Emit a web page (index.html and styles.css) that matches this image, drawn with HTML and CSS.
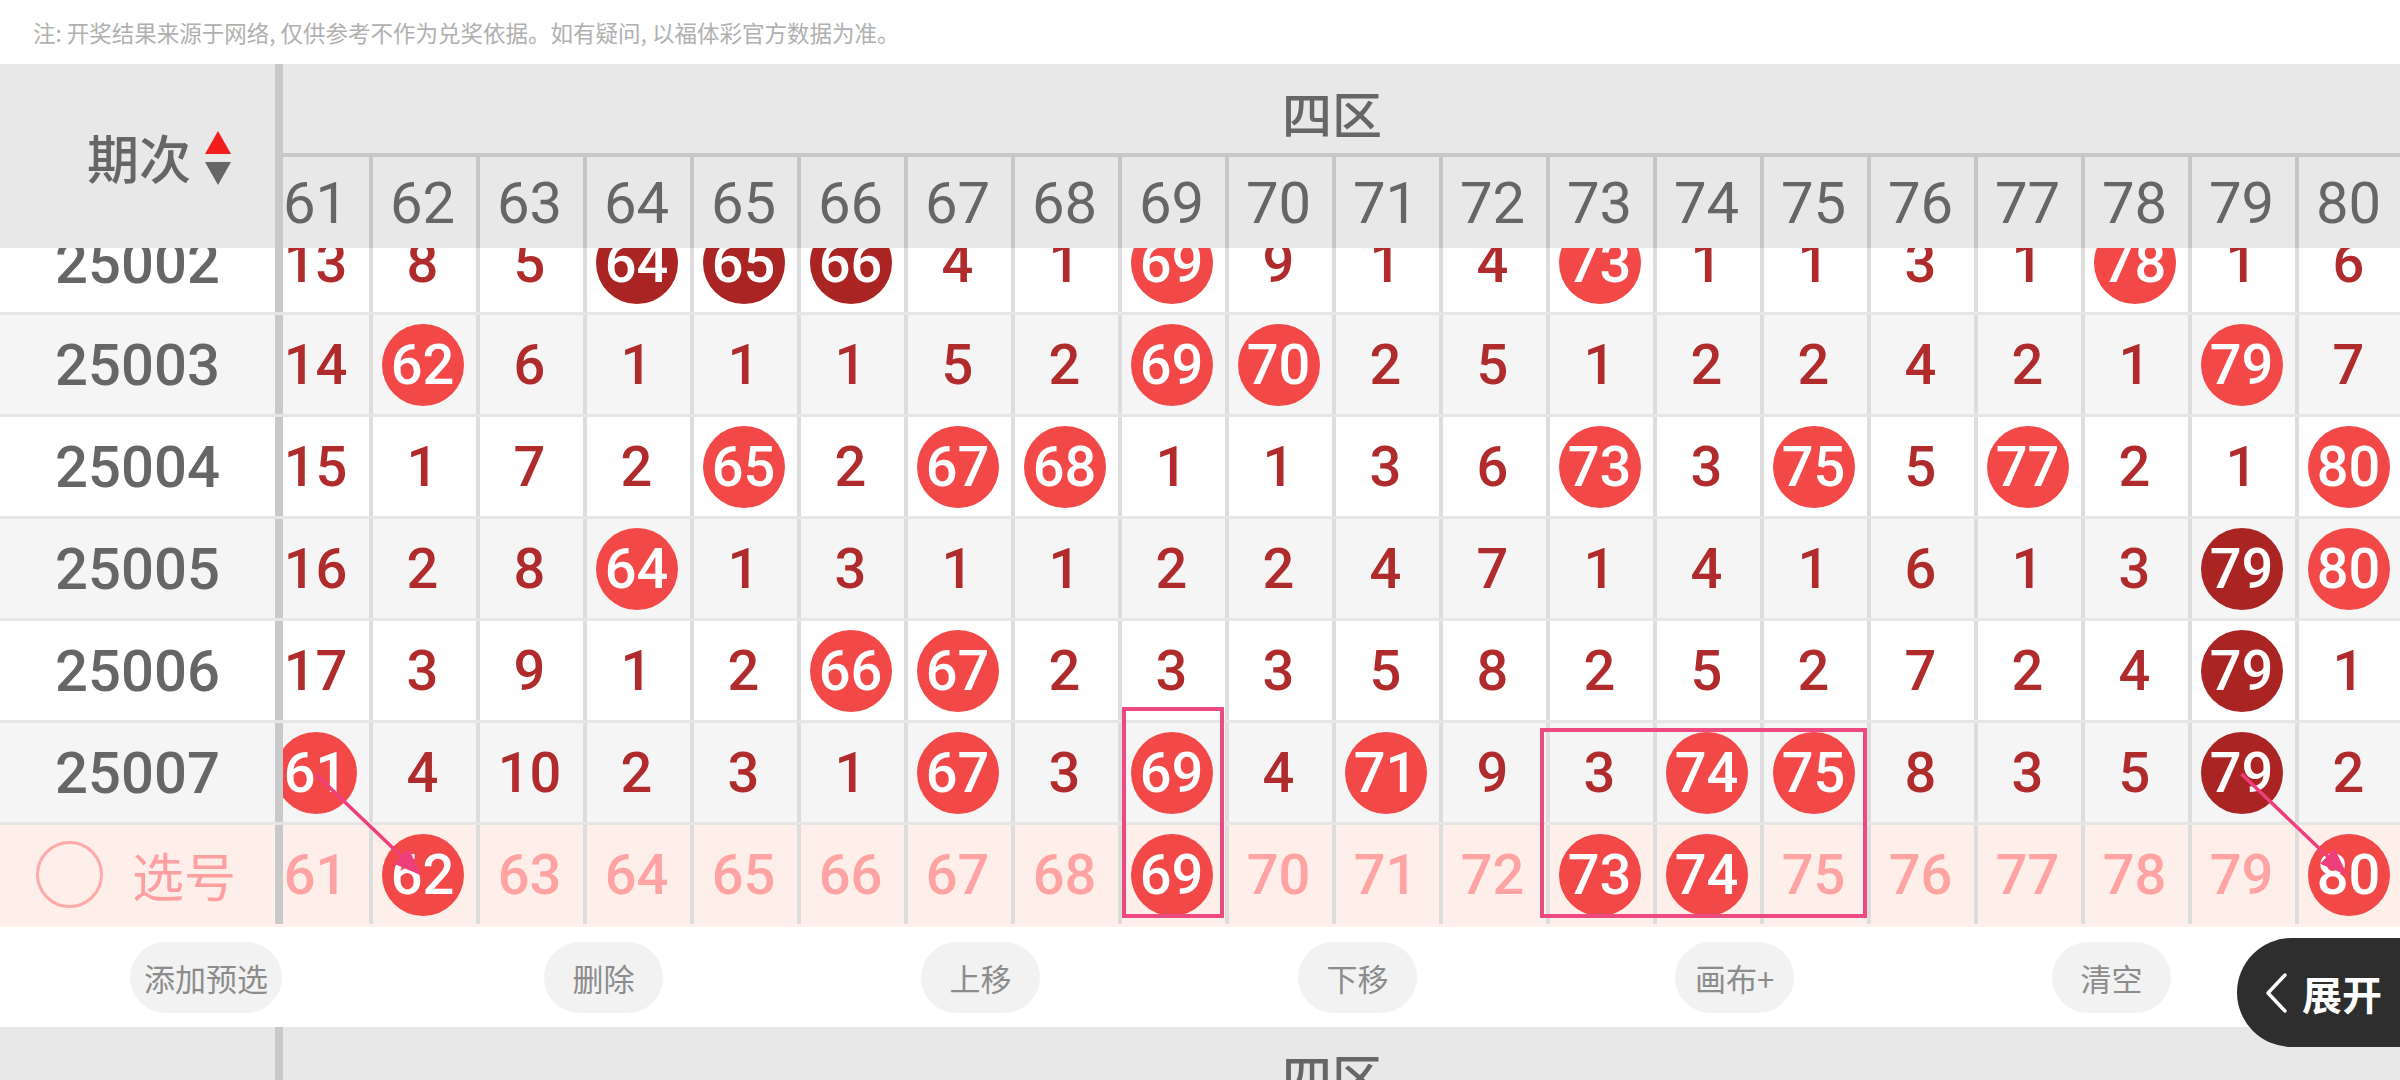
FILE: index.html
```html
<!DOCTYPE html>
<html lang="zh-CN">
<head>
<meta charset="utf-8">
<title>四区走势</title>
<link rel="stylesheet" href="styles.css">
</head>
<body>
<div class="notice">注: 开奖结果来源于网络, 仅供参考不作为兑奖依据。如有疑问, 以福体彩官方数据为准。</div>

<section class="table">
  <div class="thead">
    <div class="lead head-lead"><span class="lead-title">期次</span><span class="sort"><i class="up"></i><i class="down"></i></span></div>
    <div class="scroll">
      <div class="track">
        <div class="zone">四区</div>
        <div class="hcells">
          <div class="hc">61</div><div class="hc">62</div><div class="hc">63</div><div class="hc">64</div><div class="hc">65</div><div class="hc">66</div><div class="hc">67</div><div class="hc">68</div><div class="hc">69</div><div class="hc">70</div><div class="hc">71</div><div class="hc">72</div><div class="hc">73</div><div class="hc">74</div><div class="hc">75</div><div class="hc">76</div><div class="hc">77</div><div class="hc">78</div><div class="hc">79</div><div class="hc">80</div>
        </div>
      </div>
    </div>
  </div>

  <div class="tbody">
    <div class="rows">
      <div class="row">
        <div class="lead period">25002</div>
        <div class="scroll"><div class="track cells">
          <div class="c">13</div><div class="c">8</div><div class="c">5</div><div class="c"><span class="b d">64</span></div><div class="c"><span class="b d">65</span></div><div class="c"><span class="b d">66</span></div><div class="c">4</div><div class="c">1</div><div class="c"><span class="b">69</span></div><div class="c">9</div><div class="c">1</div><div class="c">4</div><div class="c"><span class="b">73</span></div><div class="c">1</div><div class="c">1</div><div class="c">3</div><div class="c">1</div><div class="c"><span class="b">78</span></div><div class="c">1</div><div class="c">6</div>
        </div></div>
      </div>
      <div class="row alt">
        <div class="lead period">25003</div>
        <div class="scroll"><div class="track cells">
          <div class="c">14</div><div class="c"><span class="b">62</span></div><div class="c">6</div><div class="c">1</div><div class="c">1</div><div class="c">1</div><div class="c">5</div><div class="c">2</div><div class="c"><span class="b">69</span></div><div class="c"><span class="b">70</span></div><div class="c">2</div><div class="c">5</div><div class="c">1</div><div class="c">2</div><div class="c">2</div><div class="c">4</div><div class="c">2</div><div class="c">1</div><div class="c"><span class="b">79</span></div><div class="c">7</div>
        </div></div>
      </div>
      <div class="row">
        <div class="lead period">25004</div>
        <div class="scroll"><div class="track cells">
          <div class="c">15</div><div class="c">1</div><div class="c">7</div><div class="c">2</div><div class="c"><span class="b">65</span></div><div class="c">2</div><div class="c"><span class="b">67</span></div><div class="c"><span class="b">68</span></div><div class="c">1</div><div class="c">1</div><div class="c">3</div><div class="c">6</div><div class="c"><span class="b">73</span></div><div class="c">3</div><div class="c"><span class="b">75</span></div><div class="c">5</div><div class="c"><span class="b">77</span></div><div class="c">2</div><div class="c">1</div><div class="c"><span class="b">80</span></div>
        </div></div>
      </div>
      <div class="row alt">
        <div class="lead period">25005</div>
        <div class="scroll"><div class="track cells">
          <div class="c">16</div><div class="c">2</div><div class="c">8</div><div class="c"><span class="b">64</span></div><div class="c">1</div><div class="c">3</div><div class="c">1</div><div class="c">1</div><div class="c">2</div><div class="c">2</div><div class="c">4</div><div class="c">7</div><div class="c">1</div><div class="c">4</div><div class="c">1</div><div class="c">6</div><div class="c">1</div><div class="c">3</div><div class="c"><span class="b d">79</span></div><div class="c"><span class="b">80</span></div>
        </div></div>
      </div>
      <div class="row">
        <div class="lead period">25006</div>
        <div class="scroll"><div class="track cells">
          <div class="c">17</div><div class="c">3</div><div class="c">9</div><div class="c">1</div><div class="c">2</div><div class="c"><span class="b">66</span></div><div class="c"><span class="b">67</span></div><div class="c">2</div><div class="c">3</div><div class="c">3</div><div class="c">5</div><div class="c">8</div><div class="c">2</div><div class="c">5</div><div class="c">2</div><div class="c">7</div><div class="c">2</div><div class="c">4</div><div class="c"><span class="b d">79</span></div><div class="c">1</div>
        </div></div>
      </div>
      <div class="row alt">
        <div class="lead period">25007</div>
        <div class="scroll"><div class="track cells">
          <div class="c"><span class="b">61</span></div><div class="c">4</div><div class="c">10</div><div class="c">2</div><div class="c">3</div><div class="c">1</div><div class="c"><span class="b">67</span></div><div class="c">3</div><div class="c"><span class="b">69</span></div><div class="c">4</div><div class="c"><span class="b">71</span></div><div class="c">9</div><div class="c">3</div><div class="c"><span class="b">74</span></div><div class="c"><span class="b">75</span></div><div class="c">8</div><div class="c">3</div><div class="c">5</div><div class="c"><span class="b d">79</span></div><div class="c">2</div>
        </div></div>
      </div>
      <div class="row pick">
        <div class="lead pick-lead"><span class="radio"></span><span class="pick-label">选号</span></div>
        <div class="scroll"><div class="track cells">
          <div class="c p">61</div><div class="c"><span class="b">62</span></div><div class="c p">63</div><div class="c p">64</div><div class="c p">65</div><div class="c p">66</div><div class="c p">67</div><div class="c p">68</div><div class="c"><span class="b">69</span></div><div class="c p">70</div><div class="c p">71</div><div class="c p">72</div><div class="c"><span class="b">73</span></div><div class="c"><span class="b">74</span></div><div class="c p">75</div><div class="c p">76</div><div class="c p">77</div><div class="c p">78</div><div class="c p">79</div><div class="c"><span class="b">80</span></div>
        </div></div>
      </div>
    </div>

    <svg class="overlay" width="2400" height="679" viewBox="0 0 2400 679">
      <defs>
        <marker id="ah" markerWidth="8" markerHeight="6" refX="7" refY="3" orient="auto" markerUnits="strokeWidth">
          <path d="M0,0 L8,3 L0,6 z" fill="#ee3f7c"/>
        </marker>
      </defs>
      <rect x="1124" y="461" width="98" height="207" fill="none" stroke="#ec4a80" stroke-width="4"/>
      <rect x="1542" y="482" width="323" height="186" fill="none" stroke="#ec4a80" stroke-width="4"/>
      <line x1="315.5" y1="526" x2="419" y2="625" stroke="#ee3f7c" stroke-width="3.5" marker-end="url(#ah)"/>
      <line x1="2241.5" y1="526" x2="2345" y2="625" stroke="#ee3f7c" stroke-width="3.5" marker-end="url(#ah)"/>
    </svg>
  </div>
</section>

<div class="actions">
  <button class="btn">添加预选</button>
  <button class="btn">删除</button>
  <button class="btn">上移</button>
  <button class="btn">下移</button>
  <button class="btn">画布+</button>
  <button class="btn">清空</button>
</div>

<section class="table">
  <div class="thead">
    <div class="lead head-lead"></div>
    <div class="scroll">
      <div class="track">
        <div class="zone">四区</div>
      </div>
    </div>
  </div>
</section>

<button class="expand">
  <svg class="chev" width="24" height="42" viewBox="0 0 24 42"><polyline points="21,3 4,21 21,39" fill="none" stroke="#fff" stroke-width="3.5" stroke-linecap="round" stroke-linejoin="round"/></svg>
  <span>展开</span>
</button>
</body>
</html>
```

FILE: styles.css
```css
* {
  box-sizing: border-box;
  margin: 0;
  padding: 0;
}

html, body {
  width: 2400px;
  height: 1080px;
  overflow: hidden;
  background: #fff;
}

body {
  position: relative;
  font-family: Roboto, "Noto Sans CJK SC", sans-serif;
}

.notice {
  height: 64px;
  padding-left: 33px;
  display: flex;
  align-items: center;
  font-family: "Noto Sans CJK SC", sans-serif;
  font-size: 22.5px;
  color: #b0b0b0;
  white-space: nowrap;
}

.thead {
  display: flex;
  height: 184px;
  background: #e8e8e8;
}

.lead {
  width: 283px;
  flex: none;
  border-right: 8px solid #c9c9c9;
  display: flex;
  align-items: center;
  justify-content: center;
}

.head-lead {
  justify-content: flex-end;
  padding-right: 44px;
}

.lead-title {
  font-family: "Noto Sans CJK SC", sans-serif;
  font-size: 52px;
  font-weight: 500;
  color: #666;
  margin-right: 14px;
}

.sort {
  display: flex;
  flex-direction: column;
  gap: 8px;
  margin-top: 4px;
}

.sort i {
  display: block;
  width: 0;
  height: 0;
  border-left: 13px solid transparent;
  border-right: 13px solid transparent;
}

.sort .up {
  border-bottom: 23px solid #f21d1d;
}

.sort .down {
  border-top: 23px solid #666;
}

.scroll {
  flex: 1;
  overflow: hidden;
  height: 100%;
}

.track {
  width: 2140px;
  margin-left: -21px;
}

.zone {
  height: 93px;
  padding-top: 6px;
  border-bottom: 4px solid #c8c8c8;
  display: flex;
  align-items: center;
  justify-content: center;
  font-family: "Noto Sans CJK SC", sans-serif;
  font-size: 50px;
  font-weight: 500;
  color: #666;
}

.hcells {
  display: flex;
  height: 91px;
}

.hc {
  width: 107px;
  flex: none;
  border-left: 4px solid #c6c6c6;
  padding-right: 4px;
  display: flex;
  align-items: center;
  justify-content: center;
  font-size: 58px;
  color: #666;
}

.tbody {
  position: relative;
  height: 679px;
  overflow: hidden;
}

.rows {
  margin-top: -35px;
}

.row {
  display: flex;
  height: 102px;
  border-bottom: 3px solid #e6e6e6;
  background: #fff;
}

.row.alt {
  background: #f5f5f5;
}

.row.pick {
  background: #ffefea;
  border-bottom-color: #ffefea;
}

.period {
  font-size: 58px;
  font-weight: 500;
  color: #666;
}

.pick-lead {
  justify-content: flex-start;
  padding-left: 36px;
  gap: 29px;
}

.radio {
  width: 67px;
  height: 67px;
  border-radius: 50%;
  border: 3px solid #ffa9a9;
}

.pick-label {
  font-family: "Noto Sans CJK SC", sans-serif;
  font-size: 52px;
  color: #ffa0a0;
}

.cells {
  display: flex;
  height: 100%;
}

.c {
  width: 107px;
  flex: none;
  height: 100%;
  border-left: 4px solid #dddddd;
  padding-right: 4px;
  display: flex;
  align-items: center;
  justify-content: center;
  font-size: 56px;
  font-weight: 500;
  color: #b02c2c;
}

.c.p {
  color: #ffa3a3;
}

.b {
  width: 82px;
  height: 82px;
  flex: none;
  border-radius: 50%;
  background: #f34848;
  color: #fff;
  display: flex;
  align-items: center;
  justify-content: center;
}

.b.d {
  background: #ab2424;
}

.overlay {
  position: absolute;
  top: 0;
  left: 0;
  pointer-events: none;
}

.actions {
  height: 100px;
  display: flex;
  align-items: center;
  padding-left: 130px;
  gap: 258px;
}

.btn {
  min-width: 119px;
  height: 71px;
  padding: 0 14px;
  border: none;
  border-radius: 36px;
  background: #f2f2f2;
  color: #8c8c8c;
  font-family: "Noto Sans CJK SC", sans-serif;
  font-size: 31px;
  display: flex;
  align-items: center;
  justify-content: center;
}

.btn:first-child {
  margin-right: 4px;
}

.expand {
  position: absolute;
  top: 938px;
  right: 0;
  width: 163px;
  height: 109px;
  border: none;
  border-radius: 55px 0 0 55px;
  background: #2e2e2e;
  color: #fff;
  display: flex;
  align-items: center;
  padding-left: 27px;
  gap: 14px;
  font-family: "Noto Sans CJK SC", sans-serif;
  font-size: 40px;
  font-weight: 700;
}

.chev {
  flex: none;
}
```
